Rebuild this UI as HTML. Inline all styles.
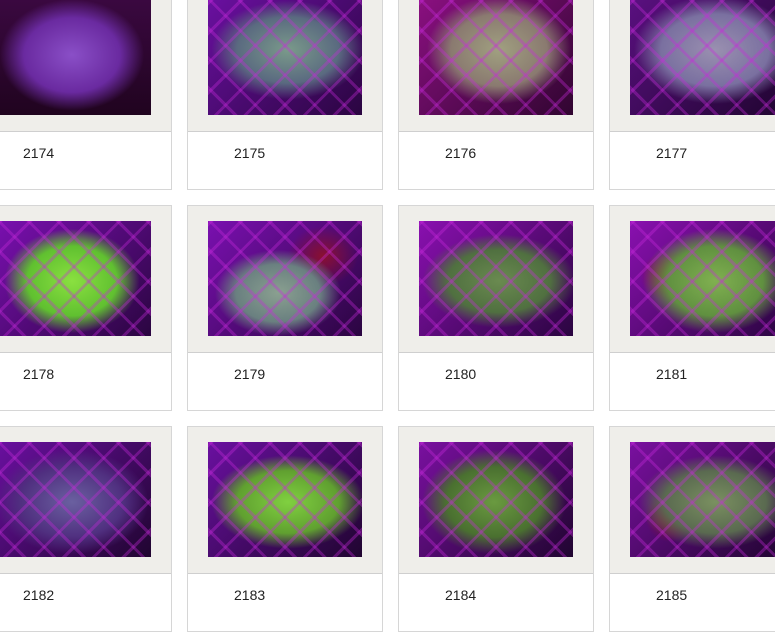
<!DOCTYPE html>
<html><head><meta charset="utf-8"><style>
html,body{margin:0;padding:0;width:775px;height:625px;overflow:hidden;background:#fff;font-family:"Liberation Sans",Arial,sans-serif;}
.card{position:absolute;width:194px;height:204px;border:1px solid #d6d6d6;background:#fff;}
.top{position:absolute;left:0;top:0;width:194px;height:146px;background:#efeeea;border-bottom:1px solid #cfcfcf;}
.img{position:absolute;left:20px;top:15px;width:154px;height:115px;}
.lbl{position:absolute;left:46px;top:160px;font-size:14px;color:#222;}
</style></head><body>
<div id="g"></div>
<script>
var labels=[2174,2175,2176,2177,2178,2179,2180,2181,2182,2183,2184,2185];
var net="repeating-linear-gradient(45deg,transparent 0 18px,rgba(200,40,220,.35) 18px 21px),repeating-linear-gradient(-45deg,transparent 0 18px,rgba(200,40,220,.35) 18px 21px),";
var bgs=[
"radial-gradient(ellipse 80px 62px at 75px 55px,#8a4fc7,#6a2aa0 60%,transparent 90%),linear-gradient(#3a0840,#20041f)",
net+"radial-gradient(ellipse 85px 55px at 80px 50px,#7a9a8a,#5a6a80 60%,transparent 90%),linear-gradient(135deg,#6a10a0,#2a0540)",
net+"radial-gradient(ellipse 80px 60px at 80px 50px,#a0a080,#8a7a70 60%,transparent 90%),linear-gradient(135deg,#8a1080,#300530)",
net+"radial-gradient(ellipse 90px 60px at 85px 50px,#9a90b0,#7a70a0 60%,transparent 90%),linear-gradient(135deg,#5a1080,#200530)",
net+"radial-gradient(ellipse 75px 58px at 75px 60px,#8ae040,#60c030 60%,transparent 90%),linear-gradient(135deg,#7a10b0,#2a0540)",
net+"radial-gradient(ellipse 70px 48px at 70px 72px,#8aa090,#6a8080 60%,transparent 90%),radial-gradient(ellipse 35px 30px at 115px 35px,#8a1030,transparent),linear-gradient(135deg,#7a10b0,#2a0540)",
net+"radial-gradient(ellipse 85px 52px at 80px 60px,#6a8a50,#507040 60%,transparent 90%),linear-gradient(135deg,#8a10b0,#2a0540)",
net+"radial-gradient(ellipse 80px 58px at 85px 60px,#80b050,#609040 60%,transparent 90%),radial-gradient(ellipse 30px 25px at 40px 55px,#901030,transparent),linear-gradient(135deg,#8a10b0,#2a0540)",
net+"radial-gradient(ellipse 85px 58px at 75px 60px,#6a60a0,#503080 60%,transparent 90%),linear-gradient(135deg,#6a10a0,#200530)",
net+"radial-gradient(ellipse 85px 52px at 80px 60px,#80d040,#60a030 60%,transparent 90%),linear-gradient(135deg,#6a10a0,#200530)",
net+"radial-gradient(ellipse 80px 58px at 75px 60px,#6a9a40,#4a7030 60%,transparent 90%),linear-gradient(135deg,#7a10a0,#200530)",
net+"radial-gradient(ellipse 85px 52px at 85px 60px,#7a9060,#5a6a50 60%,transparent 90%),radial-gradient(ellipse 25px 25px at 40px 75px,#901030,transparent),linear-gradient(135deg,#7a10a0,#200530)"
];
var h="";
for(var i=0;i<12;i++){var r=Math.floor(i/4),c=i%4;
var x=-24+c*211,y=-16+r*221;
h+='<div class="card" style="left:'+x+'px;top:'+y+'px"><div class="top"><div class="img" style="background:'+bgs[i]+'"></div></div><div class="lbl">'+labels[i]+'</div></div>';}
document.getElementById("g").innerHTML=h;
</script>
</body></html>
